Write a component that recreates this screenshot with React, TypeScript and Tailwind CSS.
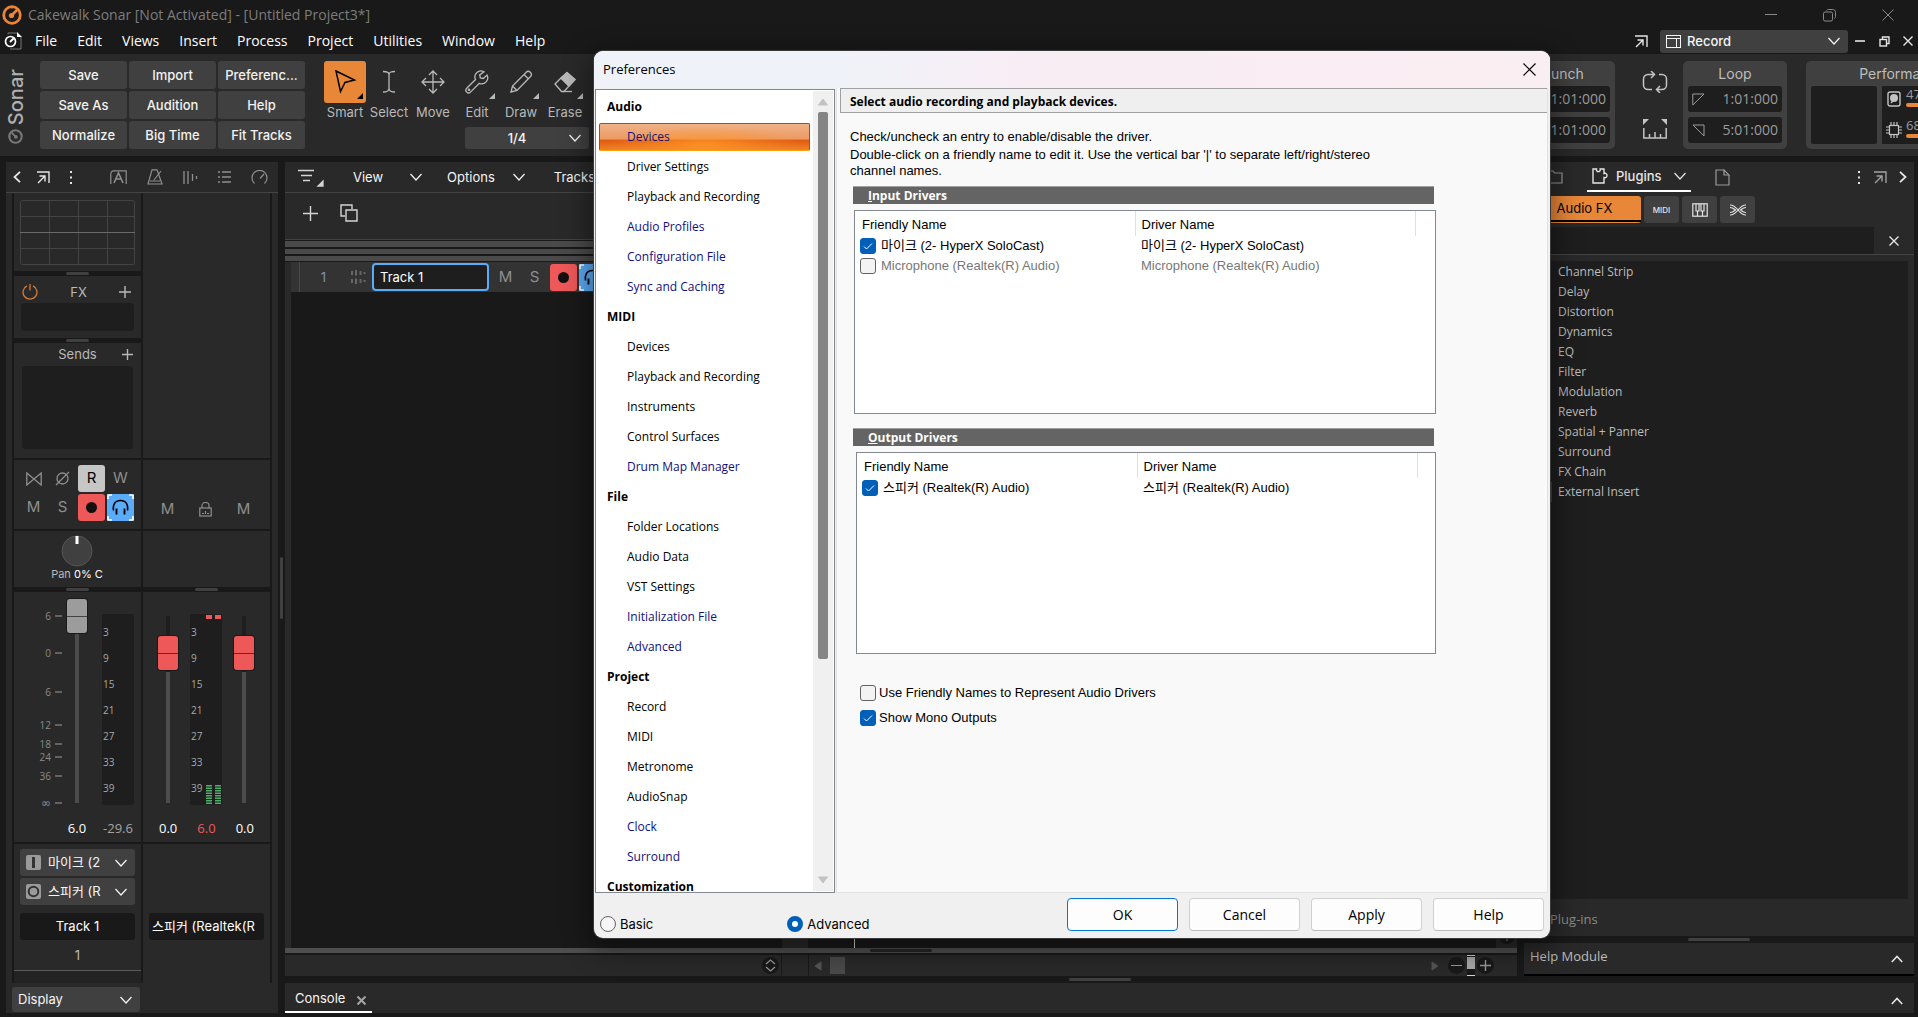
import React from "react";

const ui = "font-['Inter','Noto_Sans_CJK_KR',sans-serif]";
const sys = "font-['Open_Sans','Noto_Sans_CJK_KR',sans-serif]";
const arial = "font-['Liberation_Sans','Noto_Sans_CJK_KR',sans-serif]";

type SvgProps = {
  w?: number;
  h?: number;
  className?: string;
  sw?: number;
  children: React.ReactNode;
};

function Svg({ w = 16, h = 16, className = "", sw = 1, children }: SvgProps) {
  return (
    <svg
      width={w}
      height={h}
      viewBox={`0 0 ${w} ${h}`}
      fill="none"
      stroke="currentColor"
      strokeWidth={sw}
      className={`shrink-0 ${className}`}
      aria-hidden="true"
    >
      {children}
    </svg>
  );
}

function Chevron({ className = "" }: { className?: string }) {
  return (
    <Svg w={12} h={8} sw={1.2} className={className}>
      <path d="M.5 1 6 7l5.500-6" />
    </Svg>
  );
}

function ChevronUp() {
  return (
    <Svg w={12} h={8} sw={1.6} className="text-neutral-200">
      <path d="M.8 7 6 1.500 11.200 7" />
    </Svg>
  );
}

function PopOut({ className = "" }: { className?: string }) {
  return (
    <Svg w={13} h={13} sw={1.4} className={className}>
      <path d="M0 1h12v11M1 12l7-7M2.500 5H8v5.500" />
    </Svg>
  );
}

function Dots() {
  return (
    <Svg w={4} h={13} className="text-neutral-200">
      <path d="M1 1h2M1 6.500h2M1 12h2" strokeWidth="2" />
    </Svg>
  );
}

function Cross({ size = 11, sw = 1.2 }: { size?: number; sw?: number }) {
  return (
    <Svg w={size} h={size} sw={sw}>
      <path d={`M.5.5l${size - 1} ${size - 1}M${size - 0.5}.5l-${size - 1} ${size - 1}`} />
    </Svg>
  );
}

function Plus({ size = 12 }: { size?: number }) {
  return (
    <Svg w={size} h={size} sw={1.4}>
      <path d={`M${size / 2} 0v${size}M0 ${size / 2}h${size}`} />
    </Svg>
  );
}

function Logo({ className, w }: { className: string; w: number }) {
  return (
    <svg width={w} height={w} viewBox="0 0 20 20" fill="none" stroke="currentColor" className={className} aria-hidden="true">
      <circle cx="10" cy="10" r="8.300" strokeWidth="2.800" />
      <circle cx="9.500" cy="10.500" r="2.600" fill="currentColor" stroke="none" />
      <path d="M9.500 10.500 15.500 4.500" strokeWidth="2.600" />
      <path d="M10 3.500v-2.500" strokeWidth="1.500" />
    </svg>
  );
}

type SelectProps = {
  label: string;
  value: string;
  className?: string;
  selectClass?: string;
  icon?: React.ReactNode;
};

function Select({ label, value, className = "", selectClass = "", icon }: SelectProps) {
  return (
    <div className={`grid items-center rounded-[3px] bg-[#404040] text-neutral-100 ${className}`}>
      <select
        aria-label={label}
        className={`col-start-1 row-start-1 h-full w-full min-w-0 appearance-none bg-transparent outline-none ${selectClass}`}
      >
        <option>{value}</option>
      </select>
      {icon && <span className="pointer-events-none col-start-1 row-start-1">{icon}</span>}
      <Chevron className="pointer-events-none col-start-1 row-start-1 mr-2 justify-self-end" />
    </div>
  );
}

/* ---------- title, menu and toolbar ---------- */

const menus = ["File", "Edit", "Views", "Insert", "Process", "Project", "Utilities", "Window", "Help"];

function TitleBar() {
  return (
    <div className={`flex h-7 items-center pt-0.5 pr-6 pl-0.5 ${sys}`}>
      <Logo w={20} className="text-[#ee8433]" />
      <h1 className="ml-1.5 text-[14px] text-[#7d7d7d]">
        Cakewalk Sonar [Not Activated] - [Untitled Project3*]
      </h1>
      <div className="ml-auto flex items-center gap-[46px] text-[#8a8a8a]">
        <button aria-label="Minimize">
          <Svg w={12} h={12}><path d="M0 5.500h12" /></Svg>
        </button>
        <button aria-label="Restore">
          <Svg w={13} h={13}>
            <rect x=".5" y="3" width="9" height="9" rx="1.500" />
            <path d="M3.500 1.500C4 .8 4.500.5 5.500.5h4c2 0 3 1 3 3v4c0 1-.3 1.500-1 2" />
          </Svg>
        </button>
        <button aria-label="Close"><Cross size={12} sw={1} /></button>
      </div>
    </div>
  );
}

function MenuBar() {
  return (
    <div className={`flex h-[26px] items-center pr-[5px] pl-1 ${sys}`}>
      <svg width="18" height="18" viewBox="0 0 18 18" fill="none" aria-hidden="true">
        <path d="M4 2.500V1h9l4 4v12H6" stroke="#777" />
        <path d="M13 0v5h5z" fill="#fff" />
        <circle cx="6.500" cy="9.500" r="5" stroke="#fff" strokeWidth="1.700" fill="#191919" />
        <path d="m6 10 4-4" stroke="#fff" strokeWidth="2" />
      </svg>
      <nav className="ml-[13px] flex gap-5 text-[14px] text-white">
        {menus.map((m) => (
          <button key={m}>{m}</button>
        ))}
      </nav>
      <div className="ml-auto flex items-center text-neutral-200">
        <button aria-label="Undock" className="mr-3"><PopOut /></button>
        <Select
          label="Workspace"
          value="Record"
          className={`h-[23px] w-[188px] text-[13px] font-medium ${ui}`}
          selectClass="pl-[27px]"
          icon={
            <Svg w={15} h={13} className="ml-1.5">
              <rect x=".5" y=".5" width="14" height="12" />
              <path d="M0 3.500h15M10.500 3v10" />
            </Svg>
          }
        />
        <button aria-label="Minimize project" className="ml-[7px]">
          <Svg w={10} h={10} sw={1.6}><path d="M0 5h10" /></Svg>
        </button>
        <button aria-label="Restore project" className="ml-3.5">
          <Svg w={11} h={11} sw={1.4}>
            <rect x="1" y="3.500" width="6.500" height="6.500" />
            <path d="M3.500 3.500V1H10v6.500H7.500" />
          </Svg>
        </button>
        <button aria-label="Close project" className="ml-[13px]"><Cross size={10} sw={1.4} /></button>
      </div>
    </div>
  );
}

const shortcuts = ["Save", "Import", "Preferenc...", "Save As", "Audition", "Help", "Normalize", "Big Time", "Fit Tracks"];

const tools: { name: string; more?: boolean; icon: React.ReactNode }[] = [
  {
    name: "Smart",
    more: true,
    icon: <Svg w={24} h={24} sw={1.5}><path d="M3 1 21.500 10 12 12.500 7.500 21.500z" /></Svg>,
  },
  {
    name: "Select",
    icon: <Svg w={24} h={24} sw={1.3}><path d="M6 1.500c3 0 6 .3 6 3 0-2.700 3-3 6-3M12 4.500v14M6 22c3 0 6-.5 6-3.500 0 3 3 3.500 6 3.500" /></Svg>,
  },
  {
    name: "Move",
    icon: (
      <Svg w={24} h={24} sw={1.3}>
        <path d="M12 1v22M1 12h22M8 5l4-4 4 4M8 19l4 4 4-4M5 8l-4 4 4 4M19 8l4 4-4 4" />
      </Svg>
    ),
  },
  {
    name: "Edit",
    more: true,
    icon: (
      <Svg w={24} h={24} sw={1.3}>
        <path d="M19 1.800a6 6 0 0 0-8.500 7.700L1.700 18.300a2.600 2.600 0 0 0 3.800 3.800l8.800-8.800A6 6 0 0 0 22 5l-3.700 3.500-3-.6-.6-3z" />
        <circle cx="4" cy="19.800" r=".7" />
      </Svg>
    ),
  },
  {
    name: "Draw",
    more: true,
    icon: (
      <Svg w={24} h={24} sw={1.3}>
        <path d="M2 22 3.500 16 17 2.500a2.500 2.500 0 0 1 4.500 4L8 20.500zM3.500 16l4.500 4.500M15 4.500l4.500 4.500" />
      </Svg>
    ),
  },
  {
    name: "Erase",
    more: true,
    icon: (
      <Svg w={24} h={24} sw={1.3}>
        <path d="m2 14 6-6 8 8-5 5.500H8.500zM8 8l6-5.500 8 7L16 16" />
        <path d="M8 8 14 2.500l8 7L16 16z" fill="currentColor" />
        <path d="M10 21.500h9" />
      </Svg>
    ),
  },
];

function Tools() {
  return (
    <div className="ml-[18px] flex flex-col">
      <div className="flex pr-0.5 text-[#b9b9b9]">
        {tools.map((t) => (
          <button key={t.name} className="flex w-11 flex-col items-center">
            <span
              className={`flex h-[42px] w-[42px] items-center justify-center rounded-[3px] ${
                t.name === "Smart" ? "bg-[#e98738] text-black" : ""
              }`}
            >
              <span className="relative">
                {t.icon}
                {t.more && (
                  <svg width="6" height="6" viewBox="0 0 6 6" className="absolute -right-[6px] -bottom-[5px] fill-current" aria-hidden="true">
                    <path d="M6 0v6H0z" />
                  </svg>
                )}
              </span>
            </span>
            <span className="text-[13px] leading-[18px] text-[#b9b9b9]">{t.name}</span>
          </button>
        ))}
      </div>
      <Select
        label="Snap resolution"
        value="1/4"
        className="mt-[6px] h-[22px] w-[124px] self-end text-[13px] font-medium"
        selectClass="pr-5 text-center [text-align-last:center]"
      />
    </div>
  );
}

function TimeBox({ title, times, flag }: { title: string; times: string[]; flag: boolean }) {
  return (
    <section className="w-[104px] rounded-[5px] bg-[#404040] px-[5px] pb-[6px]">
      <h2 className="h-[25px] text-center text-[14px] leading-[25px] text-[#bdbdbd]">{title}</h2>
      <div className="flex flex-col gap-[5px]">
        {times.map((t, i) => (
          <div key={i} className={`flex h-[26px] items-center justify-between rounded-[3px] bg-[#1e1e1e] px-1 text-[14px] text-[#9b9b9b] ${sys}`}>
            {flag ? (
              <Svg w={13} h={13}>
                {i === 0 ? <path d="M.8 12V1H12z" /> : <path d="M1 1h11v11z" />}
              </Svg>
            ) : (
              <i />
            )}
            <span>{t}</span>
          </div>
        ))}
      </div>
    </section>
  );
}

function Performance() {
  const rows = [
    {
      value: "47",
      icon: (
        <Svg w={14} h={16} sw={1.4}>
          <rect x="1" y="1" width="12" height="14" rx="2" />
          <circle cx="7" cy="7" r="4" fill="currentColor" stroke="none" />
          <path d="m4 12 3.500-4" />
        </Svg>
      ),
    },
    {
      value: "68",
      icon: (
        <Svg w={16} h={16} sw={1.2}>
          <rect x="3.500" y="3.500" width="9" height="9" />
          <path d="M5 0v3M8 0v3M11 0v3M5 13v3M8 13v3M11 13v3M0 5h3M0 8h3M0 11h3M13 5h3M13 8h3M13 11h3" />
        </Svg>
      ),
    },
  ];
  return (
    <section className="w-[112px] overflow-hidden rounded-l-[5px] bg-[#404040] pl-[5px]">
      <h2 className="h-[25px] w-[182px] text-center text-[14px] leading-[25px] text-[#bdbdbd]">Performance</h2>
      <div className="flex gap-[5px]">
        <div className="h-[58px] w-[66px] shrink-0 rounded-[2px] bg-[#1e1e1e]" />
        <div className="flex h-[58px] flex-1 flex-col gap-2.5 bg-[#1e1e1e] pl-1">
          {rows.map((r) => (
            <div key={r.value} className="flex items-end gap-1 text-[#c4c4c4]">
              <span className="flex w-4 justify-center">{r.icon}</span>
              <span className={`flex-1 overflow-hidden text-[13px] leading-[17px] text-[#9b9b9b] ${sys}`}>
                {r.value}
                <span className="block h-1 rounded-l-[2px] bg-[#e98738]" />
              </span>
            </div>
          ))}
        </div>
      </div>
    </section>
  );
}

function Toolbar() {
  return (
    <div className="flex h-[102px] bg-[#292929] pt-[7px] pb-[7px]">
      <div className="flex w-[31px] flex-col items-center justify-end gap-1 pb-[5px]">
        <span className="rotate-180 text-[20px] leading-[20px] font-medium text-[#b0b0b0] [writing-mode:vertical-rl]">Sonar</span>
        <Logo w={15} className="-rotate-90 text-[#777]" />
      </div>
      <div className="ml-[9px] grid grid-cols-[87px_87px_87px] gap-0.5">
        {shortcuts.map((s) => (
          <button key={s} className="rounded-[3px] bg-[#404040] text-[13px] font-medium text-[#f2f2f2]">
            {s}
          </button>
        ))}
      </div>
      <Tools />
      <div className="ml-auto flex">
        <TimeBox title="Punch" times={["1:01:000", "1:01:000"]} flag={false} />
        <div className="flex w-[68px] flex-col items-center gap-[26px] pt-[10px] pl-3 text-[#c4c4c4]">
          <button aria-label="Loop on/off">
            <Svg w={26} h={22} sw={1.5}>
              <path d="M10 18.500H6a4.500 4.500 0 0 1-4.500-4.500V8A4.500 4.500 0 0 1 6 3.500h6M9 0l3.500 3.500L9 7M17 3.500h3A4.500 4.500 0 0 1 24.500 8v6a4.500 4.500 0 0 1-4.500 4.500h-5M18 15l-3.500 3.500L18 22" />
            </Svg>
          </button>
          <button aria-label="Set loop to selection">
            <Svg w={24} h={20} sw={1.5}>
              <path d="M.8 9v10h22.400V9M6.500 19v-4M12 19v-6M17.500 19v-4" />
              <path d="M0 0h6L0 6zM24 0h-6l6 6z" fill="currentColor" stroke="none" />
            </Svg>
          </button>
        </div>
        <TimeBox title="Loop" times={["1:01:000", "5:01:000"]} flag />
        <div className="w-[19px]" />
        <Performance />
      </div>
    </div>
  );
}

/* ---------- mixer strips ---------- */

function Grip({ tall = false }: { tall?: boolean }) {
  return (
    <div className="flex h-[5px] shrink-0 items-center justify-center">
      <span className={`h-[3px] rounded-full bg-[#404040] ${tall ? "w-[62px]" : "w-[23px]"}`} />
    </div>
  );
}

function Eq() {
  return (
    <Svg w={115} h={65} className="text-[#444]">
      <rect x=".5" y=".5" width="114" height="64" rx="2" />
      <path d="M29.500 0v65M58.500 0v65M87.500 0v65M0 16.500h115M0 48.500h115" />
      <path d="M0 32.500h115" stroke="#6a6a6a" />
    </Svg>
  );
}

type FaderProps = { label: string; value: number; red?: boolean };

function Fader({ label, value, red }: FaderProps) {
  return (
    <input
      type="range"
      aria-label={label}
      min={0}
      max={100}
      defaultValue={value}
      className={`h-[204px] w-5 appearance-none bg-[length:4px_187px] bg-bottom bg-no-repeat [direction:rtl] [writing-mode:vertical-lr] [&::-webkit-slider-thumb]:h-[34px] [&::-webkit-slider-thumb]:w-5 [&::-webkit-slider-thumb]:appearance-none [&::-webkit-slider-thumb]:rounded-[3px] [&::-webkit-slider-thumb]:shadow-[0_0_0_1px_#1a1a1a] ${
        red
          ? "bg-[linear-gradient(#1e1e1e_30%,#4c4c4c_30%)] [&::-webkit-slider-thumb]:bg-[linear-gradient(#ee5859_49%,#7a1f20_49%,#7a1f20_52%,#ee5859_52%)]"
          : "bg-[linear-gradient(#4c4c4c,#4c4c4c)] [&::-webkit-slider-thumb]:bg-[linear-gradient(#9c9c9c_49%,#444_49%,#444_52%,#9c9c9c_52%)]"
      }`}
    />
  );
}

const faderScale: [string, number][] = [
  ["6", 17], ["0", 54], ["6", 93], ["12", 126], ["18", 145], ["24", 158], ["36", 177], ["∞", 204],
];

function FaderScale() {
  return (
    <svg width="40" height="212" viewBox="0 0 40 212" className="shrink-0 font-['Open_Sans','DejaVu_Sans',sans-serif] text-[10px]">
      {faderScale.map(([t, y]) => (
        <g key={y}>
          <text x="29" y={y + 4} textAnchor="end" fill="#8b8b8b" className={t === "∞" ? "font-['DejaVu_Sans'] text-[12px]" : ""}>
            {t}
          </text>
          <path d={`M33 ${y}h7`} stroke="#777" strokeWidth="1.500" />
        </g>
      ))}
    </svg>
  );
}

function Meter({ live = false }: { live?: boolean }) {
  return (
    <svg width="32" height="191" viewBox="0 0 32 191" className={`mt-[15px] shrink-0 text-[10px] ${sys}`}>
      <rect width="32" height="191" rx="2" fill="#1e1e1e" />
      {[3, 9, 15, 21, 27, 33, 39].map((n, i) => (
        <text key={n} x="1" y={22 + i * 26} fill="#a8a8a8">{n}</text>
      ))}
      {live && (
        <g>
          <path d="M16 1h6v4h-6zM25 1h6v4h-6z" fill="#ee5859" />
          <path d="M19 190v-20M28 190v-20" stroke="#4fae6c" strokeWidth="6" strokeDasharray="1.500 1" />
        </g>
      )}
    </svg>
  );
}

const cell = "flex h-[27px] w-[27px] items-center justify-center rounded-[3px] text-[15px]";

function RecordButton() {
  return (
    <button aria-label="Arm for recording" className={`${cell} bg-[#ee5859]`}>
      <span className="h-[11px] w-[11px] rounded-full bg-[#111]" />
    </button>
  );
}

function EchoButton({ label }: { label: string }) {
  return (
    <button aria-label={label} className={`${cell} bg-[#5aabf8]`}>
      <Svg w={27} h={27} sw={1.6} className="text-black">
        <path d="M1 5V1h4M22 1h4v4M26 22v4h-4M5 26H1v-4" stroke="#fff" />
        <path d="M6.500 16.500C5.800 12 7 6.500 13.500 6.500s7.700 5.500 7 10" />
        <path d="M9.500 14.500v6M17.500 14.500v6" strokeWidth="1.900" />
      </Svg>
    </button>
  );
}

function StripOne() {
  return (
    <div className="flex w-[127px] flex-col">
      <div className="flex h-[78px] shrink-0 items-center justify-center bg-[#292929]"><Eq /></div>
      <Grip />
      <div className="h-[62px] shrink-0 bg-[#292929] px-[7px] pt-[5px]">
        <div className="flex h-[22px] items-center justify-between pr-[3px] pl-px text-[#b9b9b9]">
          <button aria-label="FX power">
            <Svg w={16} h={16} sw={1.3} className="text-[#d57b3a]">
              <path d="M5 1.800a7 7 0 1 0 6 0M8 0v6.500" />
            </Svg>
          </button>
          <h2 className="text-[13px]">FX</h2>
          <button aria-label="Add effect"><Plus /></button>
        </div>
        <div className="h-7 rounded-[4px] bg-[#1e1e1e]" />
      </div>
      <Grip />
      <div className="flex min-h-[115px] flex-1 flex-col bg-[#292929] px-2 pb-[9px]">
        <div className="grid h-[23px] grid-cols-[16px_1fr_16px] items-center text-[#b9b9b9]">
          <h2 className="col-start-2 text-center text-[13px]">Sends</h2>
          <button aria-label="Add send" className="justify-self-end"><Plus size={11} /></button>
        </div>
        <div className="flex-1 rounded-[4px] bg-[#1e1e1e]" />
      </div>
      <div className="h-0.5 shrink-0" />
      <div className="grid h-[69px] shrink-0 grid-cols-[repeat(4,27px)] content-start gap-0.5 bg-[#292929] pt-[5px] pl-[6px] text-[#8f8f8f]">
        <button aria-label="Interleave" className={cell}>
          <Svg w={16} h={14} sw={1.3}><path d="M.8 1v12L15.200 1v12z" /></Svg>
        </button>
        <button aria-label="Phase" className={cell}>
          <Svg w={15} h={15} sw={1.3}><circle cx="7.500" cy="7.500" r="5.500" /><path d="M1 14 14 1" /></Svg>
        </button>
        <button className={`${cell} bg-[#c6c6c6] text-black`}>R</button>
        <button className={cell}>W</button>
        <button className={cell}>M</button>
        <button className={cell}>S</button>
        <RecordButton />
        <EchoButton label="Input echo" />
      </div>
      <div className="h-0.5 shrink-0" />
      <div className="flex h-14 shrink-0 flex-col items-center bg-[#292929] pt-1 pr-px">
        <svg width="32" height="32" viewBox="0 0 32 32" aria-hidden="true">
          <circle cx="16" cy="16" r="15" fill="#404040" stroke="#555" />
          <path d="M16 1v8" stroke="#fff" strokeWidth="3" />
        </svg>
        <p className="text-[11px] leading-[15px] text-[#b9b9b9]">
          Pan <span className="text-white">0% C</span>
        </p>
      </div>
      <Grip />
      <div className="h-[250px] shrink-0 bg-[#292929]">
        <div className="flex h-[219px] pt-[7px] pl-2">
          <FaderScale />
          <div className="ml-[5px]"><Fader label="Track volume" value={100} /></div>
          <div className="ml-[15px]"><Meter /></div>
        </div>
        <div className={`flex pl-[39px] text-[13px] leading-[35px] ${sys}`}>
          <span className="w-12 text-center text-white">6.0</span>
          <span className="w-[34px] text-center whitespace-nowrap text-[#a5a5a5]">-29.6</span>
        </div>
      </div>
      <div className="h-0.5 shrink-0" />
      <div className="flex h-[127px] shrink-0 flex-col gap-0.5 border-b border-[#5a5a5a] bg-[#292929] px-[6px] pt-[5px]">
        <Select
          label="Input"
          value="마이크 (2"
          className="h-[27px] text-[13px]"
          selectClass="pl-7"
          icon={
            <Svg w={15} h={15} className="ml-1.5">
              <rect width="15" height="15" rx="2" fill="#9a9a9a" stroke="none" />
              <path d="M7.500 2v11" stroke="#333" strokeWidth="3" />
            </Svg>
          }
        />
        <Select
          label="Output"
          value="스피커 (R"
          className="h-[27px] text-[13px]"
          selectClass="pl-7"
          icon={
            <Svg w={15} h={15} className="ml-1.5">
              <rect width="15" height="15" rx="2" fill="#9a9a9a" stroke="none" />
              <circle cx="7.500" cy="7.500" r="4.800" stroke="#333" strokeWidth="2" />
            </Svg>
          }
        />
        <button className="mt-[6px] h-[27px] rounded-[3px] bg-[#191919] text-[13px] text-white">Track 1</button>
        <span className="text-center text-[13px] leading-[27px] text-[#b9b9b9]">1</span>
      </div>
      <div className="h-3 shrink-0 bg-[#232323]" />
    </div>
  );
}

function StripTwo() {
  return (
    <div className="flex w-[127px] flex-col">
      <div className="flex-1 bg-[#292929]" />
      <div className="h-0.5 shrink-0" />
      <div className="flex h-[69px] shrink-0 items-end justify-between bg-[#292929] pr-[13px] pb-[6px] pl-[11px] text-[#8f8f8f]">
        <button className={cell}>M</button>
        <button aria-label="Lock" className={cell}>
          <Svg w={13} h={15} sw={1.2}>
            <rect x=".8" y="6" width="11.400" height="8" />
            <path d="M3 6V3.500a3.500 3 0 0 1 7 0V6M3 11.500h2M8 11.500h2M6.500 9v3" />
          </Svg>
        </button>
        <button className={cell}>M</button>
      </div>
      <div className="h-0.5 shrink-0" />
      <div className="h-14 shrink-0 bg-[#292929]" />
      <Grip />
      <div className="h-[250px] shrink-0 bg-[#292929]">
        <div className="flex h-[219px] pt-[7px] pl-[15px]">
          <Fader label="Left volume" value={78} red />
          <div className="mx-[12px]"><Meter live /></div>
          <Fader label="Right volume" value={78} red />
        </div>
        <div className={`flex px-[6px] text-center text-[13px] leading-[35px] text-white ${sys}`}>
          <span className="flex-1">0.0</span>
          <span className="flex-1 text-[#ee5859]">6.0</span>
          <span className="flex-1">0.0</span>
        </div>
      </div>
      <div className="h-0.5 shrink-0" />
      <div className="h-[139px] shrink-0 bg-[#292929] px-[6px] pt-[69px]">
        <button className="h-[27px] w-full overflow-hidden rounded-[3px] bg-[#191919] pl-[3px] text-left text-[13px] whitespace-nowrap text-white">
          스피커 (Realtek(R
        </button>
      </div>
    </div>
  );
}

function Mixer() {
  return (
    <aside className="flex w-[272px] shrink-0 flex-col bg-[#292929]">
      <div className="flex h-[31px] shrink-0 items-center border-b border-[#444] pr-[10px] pl-[7px] text-neutral-200">
        <button aria-label="Collapse">
          <Svg w={8} h={12} sw={1.8}><path d="M7 .8 1.500 6 7 11.200" /></Svg>
        </button>
        <button aria-label="Undock inspector" className="ml-4"><PopOut /></button>
        <button aria-label="Options" className="ml-[19px]"><Dots /></button>
        <div className="ml-[37px] flex flex-1 items-center justify-between text-[#8f8f8f]">
          <Svg w={17} h={15} sw={1.2}>
            <path d="M.8 14V4C.8 2 2 .8 4 .8h12.200V14" />
            <path d="m4 13 4.500-10L13 13M6 9h5" strokeWidth="1.600" />
          </Svg>
          <Svg w={16} h={16} sw={1.2}><path d="M5 .8h5L15 15H1zM3 12h10M7 11l7-9" /></Svg>
          <Svg w={15} h={15} sw={1.3}><path d="M1 1v13M5 1v13M9.500 4v7M13.500 6v3" /></Svg>
          <Svg w={13} h={12} sw={1.3}><path d="M0 1h2M4 1h9M0 6h2M4 6h9M0 11h2M4 11h9" /></Svg>
          <Svg w={17} h={15} sw={1.2}><path d="M3.500 13.500a7.500 7.500 0 1 1 10 0M9 8.500 13 4" /></Svg>
        </div>
      </div>
      <div className="mx-[6px] flex min-h-0 flex-1 gap-0.5 bg-[#191919] px-0.5">
        <StripOne />
        <StripTwo />
      </div>
      <div className="h-[30px] shrink-0 px-[6px] pt-1">
        <Select label="Display" value="Display" className="h-[25px] w-32 text-[13px]" selectClass="pl-[6px]" />
      </div>
    </aside>
  );
}

/* ---------- track view ---------- */

function TrackView() {
  return (
    <main className="flex min-w-0 flex-1 flex-col bg-[#292929]">
      <div className="flex h-[31px] shrink-0 items-center border-b border-[#444] pl-[13px] text-[13px] text-neutral-100">
        <button aria-label="Filter tracks">
          <Svg w={26} h={20} sw={1.3} className="text-neutral-300">
            <path d="M0 3.500h16M3 8.500h11M5 13.500h7" />
            <path d="M25 14v5h-5z" fill="currentColor" />
          </Svg>
        </button>
        <button className="ml-[29px] flex items-center gap-[27px]">View <Chevron /></button>
        <button className="ml-[25px] flex items-center gap-[18px]">Options <Chevron /></button>
        <button className="ml-[29px] flex items-center gap-[18px]">Tracks <Chevron /></button>
      </div>
      <div className="flex h-[47px] shrink-0 items-center gap-[22px] border-b border-[#444] pb-[6px] pl-[18px] text-neutral-300">
        <button aria-label="Add track"><Plus size={15} /></button>
        <button aria-label="Duplicate track">
          <Svg w={18} h={18} sw={1.4}>
            <path d="M12 5V1H1v11h4M6 6h11v11H6z" />
          </Svg>
        </button>
      </div>
      <div className="flex shrink-0 flex-col gap-0.5 bg-[#191919] py-px">
        <span className="h-1.5 bg-[#4a4a4a]" />
        <span className="h-[5px] bg-[#4a4a4a]" />
        <span className="h-[5px] bg-[#4a4a4a]" />
      </div>
      <div className="ml-1.5 flex flex-1 flex-col bg-[#191919]">
        <div className="flex h-[30px] items-center bg-[#333]">
          <span className="h-full w-[9px] border-r border-[#4a4a4a]" />
          <span className="w-[47px] text-center text-[13px] text-[#7d93b5]">1</span>
          <Svg w={15} h={16} sw={2} className="ml-1 text-[#666]">
            <path d="M1 2v4M1 10v4M5 1v5.500M5 9.500V15M9.500 2v4M9.500 10v4M13.500 3v2M13.500 11v2" />
          </Svg>
          <input
            aria-label="Track name"
            defaultValue="Track 1"
            className="ml-[6px] h-7 w-[117px] rounded-[4px] border-2 border-[#5aabf8] bg-[#1e1e1e] px-[6px] text-[13px] text-white outline-none"
          />
          <button className={`${cell} ml-[3px] text-[#8f8f8f]`}>M</button>
          <button className={`${cell} ml-0.5 text-[#8f8f8f]`}>S</button>
          <span className="mr-0.5 ml-0.5"><RecordButton /></span>
          <EchoButton label="Track input echo" />
        </div>
        <div className="flex-1" />
        <div className="flex h-[30px] items-stretch">
          <span className="ml-[491px] w-[26px] bg-[#292929]" />
          <span className="ml-[46px] w-px bg-neutral-300" />
          <span className="ml-auto flex w-[21px] items-end justify-center bg-[#292929] pb-1">
            <Svg>
              <circle cx="8" cy="8" r="8" fill="#191919" stroke="none" />
              <path d="M8 3v10" stroke="#999" />
            </Svg>
          </span>
        </div>
      </div>
      <div className="flex h-[7px] shrink-0 justify-center border-b-2 border-[#191919] bg-[#4f4f4f]">
        <span className="mt-px h-[3px] w-[62px] rounded-full bg-[#262626]" />
      </div>
      <div className="flex h-[21px] shrink-0 items-stretch text-[#999]">
        <div className="flex w-[497px] items-center justify-end border-r border-[#191919] pr-0.5">
          <button aria-label="Track zoom" className="flex h-[17px] w-[17px] items-center justify-center rounded-full bg-[#191919]">
            <Svg w={11} h={13} sw={1.2}><path d="m1 5 4.500-4L10 5M1 8l4.500 4L10 8" /></Svg>
          </button>
        </div>
        <div className="w-[27px] border-r border-[#191919]" />
        <div className="flex flex-1 items-center pr-[23px] pl-[5px]">
          <Svg w={8} h={10} className="text-[#555]"><path d="M7 1v8L1 5z" fill="currentColor" /></Svg>
          <span className="ml-2 h-[17px] w-[15px] bg-[#4a4a4a]" />
          <Svg w={8} h={10} className="ml-auto text-[#555]"><path d="M1 1v8l6-4z" fill="currentColor" /></Svg>
          <button aria-label="Zoom out" className="ml-[9px] flex h-[17px] w-[17px] items-center justify-center rounded-full bg-[#191919]">
            <Svg w={11} h={11}><path d="M0 5.500h11" /></Svg>
          </button>
          <span className="mx-0.5 flex h-full w-2 flex-col border-y border-neutral-300 bg-[#191919] pt-px">
            <span className="h-3 bg-[#a8a8a8]" />
          </span>
          <button aria-label="Zoom in" className="flex h-[17px] w-[17px] items-center justify-center rounded-full bg-[#191919]">
            <Plus size={11} />
          </button>
        </div>
      </div>
    </main>
  );
}

/* ---------- browser ---------- */

const categories = [
  "Channel Strip", "Delay", "Distortion", "Dynamics", "EQ", "Filter",
  "Modulation", "Reverb", "Spatial + Panner", "Surround", "FX Chain", "External Insert",
];

function Browser() {
  const tab = "flex h-[27px] w-[35px] items-center justify-center rounded-[3px] bg-[#404040]";
  return (
    <aside className="flex w-[390px] shrink-0 flex-col">
      <div className="flex min-h-0 flex-1 flex-col bg-[#292929]">
        <div className="flex h-[30px] shrink-0 items-center pr-[7px] pl-[23px] text-neutral-200">
          <button aria-label="Media" className="text-[#999]">
            <Svg w={16} h={14} sw={1.2}><path d="M1 13V1h5l1.500 2H15v10z" /></Svg>
          </button>
          <button className="ml-6 flex h-full items-center border-b-2 border-white px-[5px] text-[13px] font-medium">
            <Svg w={18} h={16} sw={1.4}>
              <path d="M1 1h3.500c-.8 3.500 4.500 3.500 3.700 0H12v4.500c4-1.500 4 5.500 0 4V15H1z" />
            </Svg>
            <span className="ml-[6px]">Plugins</span>
            <Chevron className="ml-3" />
          </button>
          <button aria-label="Notes" className="ml-6 text-[#999]">
            <Svg w={15} h={17} sw={1.2}><path d="M1 1h8l5 5v10H1zM9 1v5h5z" /></Svg>
          </button>
          <button aria-label="Browser options" className="ml-auto"><Dots /></button>
          <button aria-label="Undock browser" className="ml-[13px]"><PopOut className="text-neutral-400" /></button>
          <button aria-label="Collapse browser" className="ml-3">
            <Svg w={8} h={12} sw={1.8}><path d="m1 .8 5.500 5.200L1 11.200" /></Svg>
          </button>
        </div>
        <div className="flex shrink-0 gap-[3px] pt-1 text-neutral-200">
          <button className="h-[27px] w-[117px] rounded-[3px] bg-[#e98738] pb-px text-[13px] text-black">
            <span className="block border-b-2 border-black pl-1 leading-[24px]">Audio FX</span>
          </button>
          <button className={`${tab} text-[8px] font-medium`}>MIDI</button>
          <button aria-label="Instruments" className={tab}>
            <Svg w={16} h={14} sw={1.2}><rect x=".8" y=".8" width="14.400" height="12.400" /><path d="M5.500 8v5M10.500 8v5M4 1v7h3V1M9 1v7h3V1" /></Svg>
          </button>
          <button aria-label="ReWire" className={tab}>
            <Svg w={16} h={12} sw={1.2}>
              <path d="M0 1c8 0 8 10 16 10M0 11C8 11 8 1 16 1M0 3.500c4 0 4.500 2.500 6 2.500M0 8.500C4 8.500 4.500 6 6 6M16 3.500c-4 0-4.500 2.500-6 2.500M16 8.500c-4 0-4.500-2.500-6-2.500" />
            </Svg>
          </button>
        </div>
        <div className="mt-1 flex h-7 shrink-0 items-center border-b border-[#444] text-neutral-200">
          <input aria-label="Search plugins" className="h-[27px] min-w-0 flex-1 bg-[#1e1e1e] outline-none" />
          <button aria-label="Clear search" className="mr-[15px] ml-[15px]"><Cross size={10} sw={1.4} /></button>
        </div>
        <ul className={`mt-1.5 mr-1.5 flex-1 bg-[#1e1e1e] pt-px text-[12px] leading-5 text-[#bdbdbd] ${sys}`}>
          {categories.map((c) => (
            <li key={c} className="flex">
              <span className={`mr-1.5 h-5 w-7 border ${c === "External Insert" ? "border-[#1f4a55]" : "border-transparent"}`} />
              {c}
            </li>
          ))}
        </ul>
        <p className={`h-[37px] shrink-0 pl-[26px] text-[13px] leading-10 text-[#8a8a8a] ${sys}`}>Plug-ins</p>
      </div>
      <div className="flex h-[7px] items-center"><div className="flex-1"><Grip tall /></div></div>
      <section className="flex h-[33px] shrink-0 items-center justify-between border-b-2 border-black bg-[#292929] pr-[11px] pl-[6px] text-[#bdbdbd]">
        <h2 className={`pb-1 text-[13px] ${sys}`}>Help Module</h2>
        <button aria-label="Expand help"><ChevronUp /></button>
      </section>
    </aside>
  );
}

/* ---------- preferences dialog ---------- */

const prefs: { group: string; items: [string, boolean?][] }[] = [
  {
    group: "Audio",
    items: [["Devices", true], ["Driver Settings"], ["Playback and Recording"], ["Audio Profiles", true], ["Configuration File", true], ["Sync and Caching", true]],
  },
  {
    group: "MIDI",
    items: [["Devices"], ["Playback and Recording"], ["Instruments"], ["Control Surfaces"], ["Drum Map Manager", true]],
  },
  {
    group: "File",
    items: [["Folder Locations"], ["Audio Data"], ["VST Settings"], ["Initialization File", true], ["Advanced", true]],
  },
  {
    group: "Project",
    items: [["Record"], ["MIDI"], ["Metronome"], ["AudioSnap"], ["Clock", true], ["Surround", true]],
  },
  { group: "Customization", items: [] },
];

function Check({ checked, label }: { checked: boolean; label?: string }) {
  return (
    <span className="grid h-4 w-4 shrink-0">
      <input
        type="checkbox"
        aria-label={label}
        defaultChecked={checked}
        className="peer col-start-1 row-start-1 h-4 w-4 appearance-none rounded-[3px] border border-[#626262] bg-[#f3f3f3] checked:border-[#005fb8] checked:bg-[#005fb8]"
      />
      <Svg className="pointer-events-none invisible col-start-1 row-start-1 text-white peer-checked:visible">
        <path d="m4 8.500 2.500 2.500L12 5.500" />
      </Svg>
    </span>
  );
}

function Tree() {
  return (
    <div className="mt-px ml-px flex w-60 shrink-0 overflow-hidden border border-[#828790] bg-white">
      <nav className={`h-0 min-h-full flex-1 overflow-hidden pt-0.5 pl-[3px] text-[12px] leading-[30px] text-black ${sys}`}>
        {prefs.map((p, g) => (
          <div key={p.group}>
            <h3 className="pl-2 font-bold">{p.group}</h3>
            {p.items.map(([name, adv], i) => {
              const active = g === 0 && i === 0;
              return (
                <button
                  key={name}
                  className={`flex h-[30px] w-[211px] items-center text-left ${adv ? "text-[#10107e]" : ""}`}
                >
                  <span
                    className={`h-7 w-full rounded-[2px] border pl-[27px] leading-[26px] ${
                      active
                        ? "border-[#8a5a2c] border-b-[#ffa012] bg-[radial-gradient(ellipse_at_50%_80%,rgba(255,150,40,.85),transparent_65%),linear-gradient(#f0b287,#ec9a62_58%,#e05a12_62%,#f08326)]"
                        : "border-transparent"
                    }`}
                  >
                    {name}
                  </span>
                </button>
              );
            })}
          </div>
        ))}
      </nav>
      <div className="mt-px mr-px mb-px flex w-5 flex-col items-center bg-[#f0f0f0] py-[7px]">
        <Svg w={10} h={8} className="text-[#c2c2c2]"><path d="M5 1 9.500 7h-9z" fill="currentColor" /></Svg>
        <span className="mt-[6px] h-[547px] w-2.5 rounded-[2px] bg-[#858585]" />
        <Svg w={10} h={8} className="mt-auto text-[#c2c2c2]"><path d="M5 7 .5 1h9z" fill="currentColor" /></Svg>
      </div>
    </div>
  );
}

type DriversProps = { title: string; listClass: string; rows: { name: string; on: boolean }[] };

function Drivers({ title, listClass, rows }: DriversProps) {
  return (
    <section className="max-w-[583px]">
      <h3 className={`mr-0.5 h-[18px] border-t border-[#a0a0a0] bg-[#646464] pl-[15px] text-[12px] leading-[17px] font-bold text-white ${sys}`}>
        <span className="underline">{title[0]}</span>
        {title.slice(1)}
      </h3>
      <div className={`mt-1.5 border border-[#828790] bg-white ${listClass}`}>
        <table className="w-full table-fixed text-left">
          <colgroup>
            <col className="w-[280px]" />
            <col className="w-[280px]" />
            <col />
          </colgroup>
          <thead>
            <tr className="h-[25px]">
              <th className="border-r border-[#e0e0e0] pt-0.5 pl-[7px] font-normal">Friendly Name</th>
              <th className="border-r border-[#e0e0e0] pt-0.5 pl-[6px] font-normal">Driver Name</th>
              <th />
            </tr>
          </thead>
          <tbody>
            {rows.map((r) => (
              <tr key={r.name} className={`h-5 leading-5 ${r.on ? "" : "text-[#777]"}`}>
                <td className="pl-[5px]">
                  <span className="flex items-center gap-[5px]">
                    <Check checked={r.on} label={r.name} />
                    {r.name}
                  </span>
                </td>
                <td className="pl-[6px]">{r.name}</td>
                <td />
              </tr>
            ))}
          </tbody>
        </table>
      </div>
    </section>
  );
}

function Radio({ label, checked }: { label: string; checked: boolean }) {
  return (
    <label className="flex items-center gap-1 text-[13px]">
      <input
        type="radio"
        name="mode"
        defaultChecked={checked}
        className="h-4 w-4 appearance-none rounded-full border border-[#626262] bg-[#f6f6f6] checked:border-[5px] checked:border-[#005fb8] checked:bg-white"
      />
      {label}
    </label>
  );
}

function Preferences() {
  return (
    <div
      role="dialog"
      aria-label="Preferences"
      className="absolute top-[51px] right-[368px] bottom-[79px] left-[594px] flex flex-col overflow-hidden rounded-[9px] bg-[#f0f0f0] text-black shadow-[0_0_0_1px_#3a3a3a,0_8px_28px_4px_rgba(0,0,0,.45)]"
    >
      <div className={`flex h-[37px] shrink-0 items-center justify-between bg-[linear-gradient(90deg,#eff3f9_25%,#f9edf5_45%,#f9eef2)] pr-[14px] pl-[9px] ${sys}`}>
        <h2 className="text-[13px]">Preferences</h2>
        <button aria-label="Close preferences"><Cross size={13} sw={1.2} /></button>
      </div>
      <div className="flex min-h-0 flex-1">
        <Tree />
        <div className="mr-0.5 ml-px flex-1 border-x border-b border-[#e2e2e2] bg-[#f9f9f9] pl-[3px]">
          <h3 className={`h-[25px] border-y border-l border-[#a0a0a0] bg-[#efefef] pl-[9px] text-[12px] leading-[25px] font-bold ${sys}`}>
            Select audio recording and playback devices.
          </h3>
          <div className={`px-[10px] pt-4 text-[13px] leading-4 ${arial}`}>
            <p className="mb-0.5">Check/uncheck an entry to enable/disable the driver.</p>
            <p className="max-w-[550px]">
              Double-click on a friendly name to edit it. Use the vertical bar '|' to separate left/right/stereo channel names.
            </p>
            <div className="mt-[7px] flex flex-col gap-3.5 pl-[3px]">
              <Drivers
                title="Input Drivers"
                listClass="ml-px h-[204px]"
                rows={[
                  { name: "마이크 (2- HyperX SoloCast)", on: true },
                  { name: "Microphone (Realtek(R) Audio)", on: false },
                ]}
              />
              <Drivers
                title="Output Drivers"
                listClass="ml-[3px] h-[202px]"
                rows={[{ name: "스피커 (Realtek(R) Audio)", on: true }]}
              />
            </div>
            <div className="mt-[31px] flex flex-col gap-[9px] pl-[10px]">
              <label className="flex items-center gap-[3px]">
                <Check checked={false} /> Use Friendly Names to Represent Audio Drivers
              </label>
              <label className="flex items-center gap-[3px]">
                <Check checked /> Show Mono Outputs
              </label>
            </div>
          </div>
        </div>
      </div>
      <div className="flex h-[45px] shrink-0 items-start pt-[5px] pr-[6px] pl-[6px]">
        <div className={`flex gap-[134px] pt-[18px] ${ui}`}>
          <Radio label="Basic" checked={false} />
          <Radio label="Advanced" checked />
        </div>
        <div className={`ml-auto flex gap-[11px] text-[14px] ${sys}`}>
          {["OK", "Cancel", "Apply", "Help"].map((b) => (
            <button
              key={b}
              className={`h-[33px] w-[111px] rounded-[4px] border bg-[#fdfdfd] ${b === "OK" ? "border-[#0078d4]" : "border-[#d0d0d0] border-b-[#bbb]"}`}
            >
              {b}
            </button>
          ))}
        </div>
      </div>
    </div>
  );
}

export default function App() {
  return (
    <div className={`relative flex h-screen min-h-[900px] flex-col overflow-hidden bg-[#191919] leading-tight ${ui}`}>
      <TitleBar />
      <MenuBar />
      <Toolbar />
      <div className="flex min-h-0 flex-1 pt-1.5 pr-1 pb-1 pl-1.5">
        <Mixer />
        <div className="flex w-[7px] items-center justify-center">
          <span className="h-[62px] w-[3px] rounded-full bg-[#404040]" />
        </div>
        <div className="flex min-w-0 flex-1 flex-col">
          <div className="flex min-h-0 flex-1 gap-[7px]">
            <TrackView />
            <Browser />
          </div>
          <div className="flex h-[7px] items-center"><div className="flex-1"><Grip tall /></div></div>
          <div className="flex h-[30px] shrink-0 items-stretch justify-between bg-[#292929] pr-[11px] text-neutral-100">
            <div className="flex items-center gap-3 border-b-2 border-white pt-0.5 pr-[6px] pl-[10px] text-[13px]">
              <button>Console</button>
              <button aria-label="Close console" className="pt-1 text-[#a5a5a5]"><Cross size={9} sw={2} /></button>
            </div>
            <button aria-label="Expand console" className="pt-1.5"><ChevronUp /></button>
          </div>
        </div>
      </div>
      <Preferences />
    </div>
  );
}
